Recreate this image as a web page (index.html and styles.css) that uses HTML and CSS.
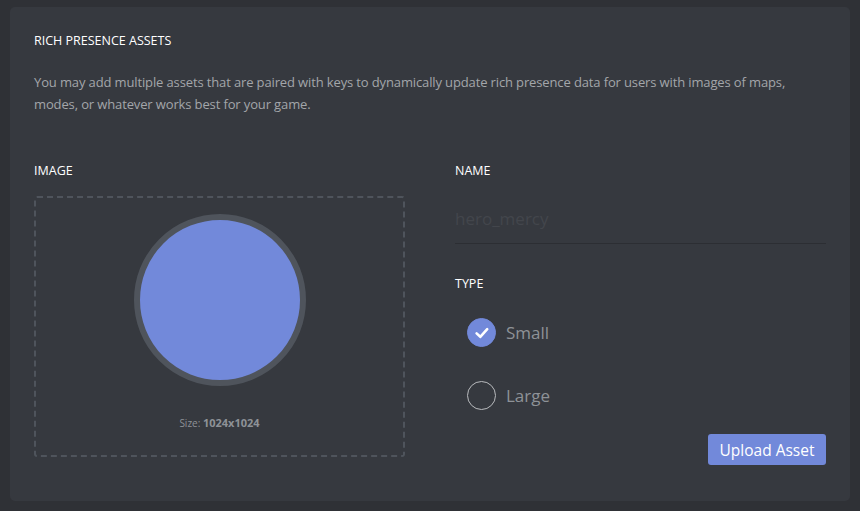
FILE: index.html
```html
<!DOCTYPE html>
<html>
<head>
<meta charset="utf-8">
<link rel="stylesheet" href="styles.css">
</head>
<body>
<div class="card">
  <h2 class="title">RICH PRESENCE ASSETS</h2>
  <p class="desc">You may add multiple assets that are paired with keys to dynamically update rich presence data for users with images of maps, modes, or whatever works best for your game.</p>
  <div class="cols">
    <div class="col">
      <div class="label">IMAGE</div>
      <div class="drop">
        <div class="avatar"></div>
        <div class="size">Size: <b>1024x1024</b></div>
      </div>
    </div>
    <div class="col">
      <div class="label">NAME</div>
      <div class="input">hero_mercy</div>
      <div class="label type">TYPE</div>
      <div class="radios">
        <div class="radio">
          <span class="dot checked"><svg width="18" height="18" viewBox="0 0 18 18"><path d="M3.6 9.4 L7.3 12.8 L14.2 5.2" fill="none" stroke="#fff" stroke-width="2.6" stroke-linecap="round" stroke-linejoin="round"/></svg></span>
          <span class="rlabel">Small</span>
        </div>
        <div class="radio">
          <span class="dot"></span>
          <span class="rlabel">Large</span>
        </div>
      </div>
      <div class="actions"><button class="btn">Upload Asset</button></div>
    </div>
  </div>
</div>
</body>
</html>
```
FILE: styles.css
```css
html, body { margin: 0; padding: 0; }
body {
  background: #2f3136;
  width: 860px;
  height: 511px;
  overflow: hidden;
  font-family: "Open Sans", "Noto Sans", sans-serif;
  padding: 7px 10px 0 10px;
  box-sizing: border-box;
}
.card {
  background: #36393f;
  border-radius: 5px;
  height: 494px;
  box-sizing: border-box;
  padding: 26px 24px 0 24px;
}
.title {
  margin: 0;
  font-size: 12.5px;
  font-weight: 500;
  color: #ffffff;
  line-height: 16px;
}
.desc {
  margin: 22px 0 0 0;
  width: 770px;
  font-size: 13px;
  line-height: 22px;
  letter-spacing: -0.13px;
  color: #a3a6aa;
}
.cols {
  display: flex;
  gap: 50px;
  margin-top: 48px;
}
.col { width: 371px; }
.label {
  font-size: 12.5px;
  font-weight: 500;
  color: #ffffff;
  line-height: 16px;
}
.drop {
  margin-top: 17px;
  height: 261px;
  box-sizing: border-box;
  border: 2px dashed #4f545c;
  border-radius: 3px;
  display: flex;
  flex-direction: column;
  align-items: center;
}
.avatar {
  margin-top: 16px;
  width: 160px;
  height: 160px;
  border-radius: 50%;
  background: #7289da;
  border: 6px solid #4f545c;
}
.size {
  margin-top: 30px;
  font-size: 10px;
  color: #8e9297;
  line-height: 14px;
}
.size b { font-weight: 700; font-size: 11px; }
.input {
  margin-top: 20px;
  height: 45px;
  line-height: 40px;
  font-size: 17px;
  color: #43464c;
  border-bottom: 1px solid #2c2e33;
  box-sizing: border-box;
}
.type { margin-top: 32px; }
.radios {
  margin-top: 26px;
  padding-left: 12px;
  display: flex;
  flex-direction: column;
  gap: 34px;
}
.radio {
  display: flex;
  align-items: center;
  gap: 10px;
}
.dot {
  width: 29px;
  height: 29px;
  border-radius: 50%;
  box-sizing: border-box;
  border: 1px solid #b9bbbe;
  display: flex;
  align-items: center;
  justify-content: center;
}
.dot.checked {
  background: #7289da;
  border-color: #7289da;
}
.rlabel {
  font-size: 17px;
  color: #8e9297;
}
.actions {
  display: flex;
  justify-content: flex-end;
  margin-top: 24px;
}
.btn {
  background: #7289da;
  color: #fff;
  border: none;
  border-radius: 3px;
  font-family: "Open Sans", "Noto Sans", sans-serif;
  font-size: 15.5px;
  width: 118px;
  height: 31px;
  padding: 0;
}
```
